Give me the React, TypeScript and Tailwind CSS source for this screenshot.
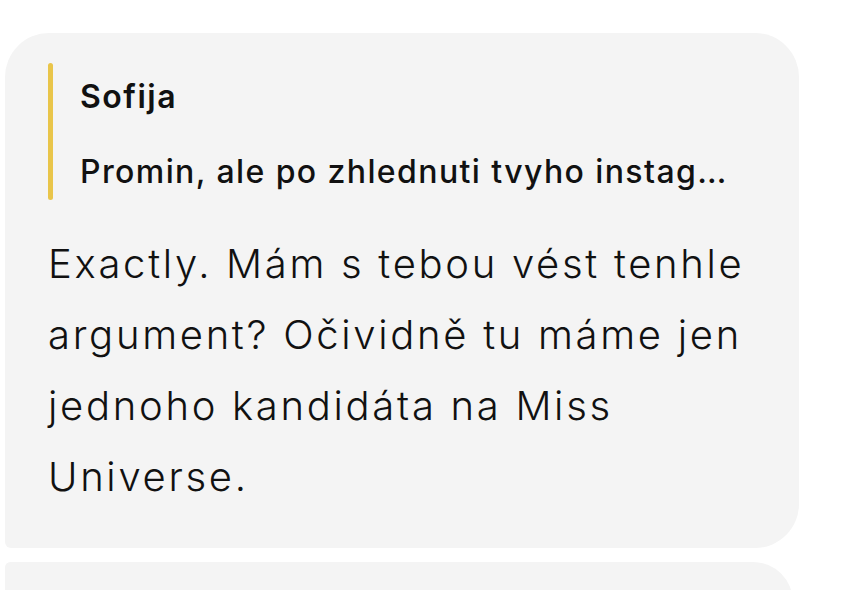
export default function App() {
  return (
    <div className="min-h-[590px] w-[847px] overflow-hidden bg-white pt-[33px] pl-[5px]">
      <div className="h-[515px] w-[794px] rounded-tl-[44px] rounded-tr-[44px] rounded-br-[44px] rounded-bl-[6px] bg-[#f4f4f4] pl-[43px] pt-[30px] text-[#111]">
        <div className="flex h-[137px] gap-[27px]">
          <div className="w-[5px] rounded-full bg-[#e9c54a]" />
          <div className="flex flex-col font-['Inter',sans-serif]">
            <div className="mt-[14px] text-[32px] leading-[40px] font-semibold tracking-[1.5px]">Sofija</div>
            <div className="mt-[35px] whitespace-nowrap text-[32px] leading-[40px] font-medium tracking-[1.4px]">Promin, ale po zhlednuti tvyho instag…</div>
          </div>
        </div>
        <p className="mt-[28px] font-['Inter',sans-serif] text-[40px] leading-[71px] font-light tracking-[2.7px]">
          Exactly. Mám s tebou vést tenhle
          <br />
          argument? Očividně tu máme jen
          <br />
          jednoho kandidáta na Miss
          <br />
          Universe.
        </p>
      </div>
      <div className="mt-[14px] h-[40px] w-[788px] rounded-tl-[6px] rounded-tr-[44px] bg-[#f4f4f4]" />
    </div>
  );
}
